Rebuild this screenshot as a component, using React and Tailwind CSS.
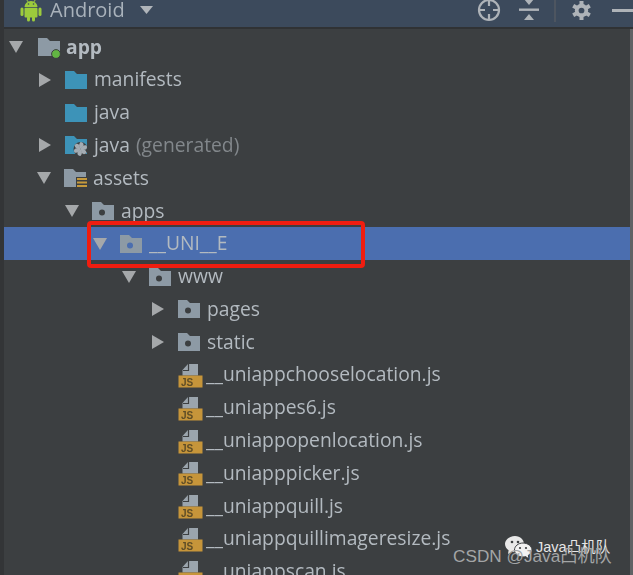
import { Fragment } from "react";

const Arrow = ({ open }) => (
  <svg width="14" height="14" viewBox="0 0 14 14" className="shrink-0">
    {open ? <path d="M0 1h14L7 13z" fill="#a5a8aa" /> : <path d="M1 0l12 7-12 7z" fill="#a5a8aa" />}
  </svg>
);

const Folder = ({ color = "#8d9aa5", children, dot }) => (
  <svg width="24" height="22" viewBox="0 0 24 22" className="shrink-0">
    <path d="M1 2h9l3 3h10v15H1z" fill={color} />
    {dot && <circle cx="11" cy="12.500" r="3" fill={dot} />}
    {children}
  </svg>
);

const AppIcon = () => (
  <Folder>
    <circle cx="19" cy="18" r="4.400" fill="#62b543" stroke="#3c3f41" strokeWidth="1" />
  </Folder>
);

const GenIcon = () => (
  <Folder color="#3d93b8">
    <circle cx="16.500" cy="15" r="7" fill="#3c3f41" />
    <g fill="#a4acb3">
      <path d="M16.500 15c-2-2-2-5 0-7 2 0 3.500 1.500 3 3.500z" />
      <path d="M16.500 15c-2-2-2-5 0-7 2 0 3.500 1.500 3 3.500z" transform="rotate(60 16.500 15)" />
      <path d="M16.500 15c-2-2-2-5 0-7 2 0 3.500 1.500 3 3.500z" transform="rotate(120 16.500 15)" />
      <path d="M16.500 15c-2-2-2-5 0-7 2 0 3.500 1.500 3 3.500z" transform="rotate(180 16.500 15)" />
      <path d="M16.500 15c-2-2-2-5 0-7 2 0 3.500 1.500 3 3.500z" transform="rotate(240 16.500 15)" />
      <path d="M16.500 15c-2-2-2-5 0-7 2 0 3.500 1.500 3 3.500z" transform="rotate(300 16.500 15)" />
    </g>
  </Folder>
);

const AssetsIcon = () => (
  <Folder>
    <rect x="13" y="10" width="11" height="12" fill="#3c3f41" />
    <g fill="#c69a3c">
      <rect x="14" y="11" width="10" height="2" />
      <rect x="14" y="14.500" width="10" height="2" />
      <rect x="14" y="18" width="10" height="2" />
    </g>
  </Folder>
);

const JsIcon = () => (
  <svg width="25" height="26" viewBox="0 0 25 26" className="shrink-0">
    <path d="M10 2h10v11.500H4.500V8z" fill="#9ba5ad" />
    <path d="M10.500 2v6.500H5" fill="none" stroke="#3c3f41" strokeWidth="1.200" />
    <rect x="0.500" y="13.500" width="24" height="12" fill="#c6953a" />
    <text x="3" y="23.500" fontSize="10" fontWeight="700" fill="#5f4d26" fontFamily="Liberation Sans, sans-serif">
      JS
    </text>
  </svg>
);

const rows = [
  { label: "app", pad: "pl-[5px]", arrow: "open", icon: <AppIcon />, spacer: "w-[14px]", bold: true },
  { label: "manifests", pad: "pl-[34px]", arrow: "closed", icon: <Folder color="#3d93b8" /> },
  { label: "java", pad: "pl-[60px]", icon: <Folder color="#3d93b8" /> },
  { label: "java", note: "(generated)", pad: "pl-[34px]", arrow: "closed", icon: <GenIcon /> },
  { label: "assets", pad: "pl-[33px]", arrow: "open", icon: <AssetsIcon /> },
  { label: "apps", pad: "pl-[61px]", arrow: "open", icon: <Folder dot="#3c3f41" /> },
  { label: "__UNI__E", pad: "pl-[89px]", arrow: "open", icon: <Folder dot="#4b6eaf" />, selected: true },
  { label: "www", pad: "pl-[118px]", arrow: "open", icon: <Folder dot="#3c3f41" /> },
  { label: "pages", pad: "pl-[147px]", arrow: "closed", icon: <Folder dot="#3c3f41" /> },
  { label: "static", pad: "pl-[147px]", arrow: "closed", icon: <Folder dot="#3c3f41" /> },
  { label: "__uniappchooselocation.js", pad: "pl-[174px]", file: true },
  { label: "__uniappes6.js", pad: "pl-[174px]", file: true },
  { label: "__uniappopenlocation.js", pad: "pl-[174px]", file: true },
  { label: "__uniapppicker.js", pad: "pl-[174px]", file: true },
  { label: "__uniappquill.js", pad: "pl-[174px]", file: true },
  { label: "__uniappquillimageresize.js", pad: "pl-[174px]", file: true },
  { label: "__uniappscan.js", pad: "pl-[174px]", file: true },
];

const Row = ({ row }) => (
  <div className={`flex h-[32.8px] shrink-0 items-center ${row.pad} ${row.selected ? "bg-[#4b6eaf]" : ""}`}>
    {row.arrow && <Arrow open={row.arrow === "open"} />}
    {row.arrow && <span className={`${row.spacer || "w-[12px]"} shrink-0`} />}
    {row.file ? <JsIcon /> : row.icon}
    <span className={`whitespace-nowrap ${row.file ? "ml-[3px]" : row.bold ? "ml-[5px]" : "ml-[6px]"} ${row.bold ? "font-bold" : ""}`}>
      {row.label}
      {row.note && <span className="ml-[6px] text-[#82878b]">{row.note}</span>}
    </span>
  </div>
);

const AndroidLogo = () => (
  <svg width="22" height="23" viewBox="0 0 22 23">
    <g fill="#9ccb3c">
      <path d="M4.500 8a6.500 6 0 0 1 13 0z" />
      <rect x="4.500" y="8.800" width="13" height="9.700" rx="1" />
      <rect x="0.500" y="8.500" width="3" height="8.500" rx="1.500" />
      <rect x="18.500" y="8.500" width="3" height="8.500" rx="1.500" />
      <rect x="7" y="17" width="3" height="5.500" rx="1.500" />
      <rect x="12" y="17" width="3" height="5.500" rx="1.500" />
      <path d="M6.500 0.500l2 3M15.500 0.500l-2 3" stroke="#9ccb3c" />
    </g>
    <circle cx="8.500" cy="5" r="0.800" fill="#3c4a5c" />
    <circle cx="13.500" cy="5" r="0.800" fill="#3c4a5c" />
  </svg>
);

const HeaderIcons = () => (
  <div className="flex items-center">
    <svg width="24" height="24" viewBox="0 0 24 24">
      <g fill="none" stroke="#aeb3b8" strokeWidth="2.200">
        <circle cx="12" cy="12" r="10" />
        <path d="M12 2v6M12 16v6M2 12h6M16 12h6" />
      </g>
    </svg>
    <svg width="20" height="22" viewBox="0 0 20 22" className="ml-[18px]">
      <path d="M5 0h10L10 6zM10 15l5 6H5z" fill="#aeb3b8" />
      <rect x="0" y="9.500" width="20" height="2.400" fill="#aeb3b8" />
    </svg>
    <span className="ml-[15px] h-[24px] w-[2px] bg-[#4d5560]" />
    <svg width="21" height="21" viewBox="0 0 22 22" className="ml-[15px]">
      <g stroke="#aeb3b8" strokeWidth="4.200">
        <path d="M11 1v20M2.300 6l17.400 10M2.300 16l17.400-10" />
      </g>
      <circle cx="11" cy="11" r="7" fill="#aeb3b8" />
      <circle cx="11" cy="11" r="3" fill="#3c4a5c" />
    </svg>
    <span className="ml-[20px] h-[3px] w-[21px] bg-[#aeb3b8]" />
  </div>
);

const WeChat = () => (
  <svg width="27" height="24" viewBox="0 0 27 24">
    <path d="M10 0C4.500 0 0 3.600 0 8c0 2.500 1.400 4.700 3.600 6.200L3 18l3.700-2.200c1 .3 2.200.4 3.300.4 5.500 0 9-3.600 9-8S15.500 0 10 0z" fill="#e8e8e8" />
    <path d="M18 7c-4.700 0-8.500 3.200-8.500 7s3.800 7 8.500 7c.9 0 1.800-.1 2.600-.4L24 23l-.7-3.700c2.200-1.300 3.700-3.200 3.700-5.300 0-3.800-4.300-7-9-7z" fill="#f2f2f2" stroke="#3c3f41" />
    <circle cx="7" cy="6" r="1.300" fill="#3c3f41" />
    <circle cx="13" cy="6" r="1.300" fill="#3c3f41" />
    <circle cx="15" cy="12" r="1.100" fill="#3c3f41" />
    <circle cx="21" cy="12" r="1.100" fill="#3c3f41" />
  </svg>
);

export default function App() {
  return (
    <div className="relative h-[575px] w-[633px] overflow-hidden bg-[#3c3f41] font-['Open_Sans','Noto_Sans_CJK_SC',sans-serif] text-[19.3px] text-[#b3bac0]">
      <div className="flex h-full blur-[0.6px]">
        <div className="w-[4px] shrink-0 bg-[#333537]" />
        <div className="flex min-w-0 flex-1 flex-col">
          <div className="flex h-[27px] shrink-0 items-center justify-between bg-[#3c4a5c] pb-[7px] pl-[16px]">
            <div className="flex items-center">
              <AndroidLogo />
              <span className="ml-[8px] text-[20px] text-[#a9b2bb]">Android</span>
              <svg width="13" height="8" viewBox="0 0 13 8" className="ml-[15px]">
                <path d="M0 0h13L6.500 8z" fill="#b0b5ba" />
              </svg>
            </div>
            <HeaderIcons />
          </div>
          <div className="h-[2px] shrink-0 bg-[#303234]" />
          <div className="flex flex-1 flex-col overflow-hidden pt-[1.600px]">
            {rows.map((row, i) => (
              <Fragment key={i}>
                <Row row={row} />
              </Fragment>
            ))}
          </div>
        </div>
      </div>

      {/* scrollbar edge on the right, over the rows */}
      <div className="absolute bottom-0 right-0 top-[29px] w-[3px] bg-[#5f6264]" />

      {/* red annotation box */}
      <div className="absolute left-[87px] top-[221px] h-[47px] w-[278px] rounded-[4px] border-[4px] border-[#f01d10]" />

      {/* watermarks */}
      <div className="absolute left-[505px] top-[536px] blur-[0.3px]">
        <WeChat />
      </div>
      <span className="absolute left-[536px] top-[537px] font-['Liberation_Sans','Noto_Sans_CJK_SC',sans-serif] text-[14.500px] text-[#e6e6e6]">
        Java凸机队
      </span>
      <span className="absolute left-[453px] top-[544px] whitespace-nowrap font-['Liberation_Sans','Noto_Sans_CJK_SC',sans-serif] text-[17.200px] text-[#a3a5a6]">
        CSDN @Java凸机队
      </span>
    </div>
  );
}
